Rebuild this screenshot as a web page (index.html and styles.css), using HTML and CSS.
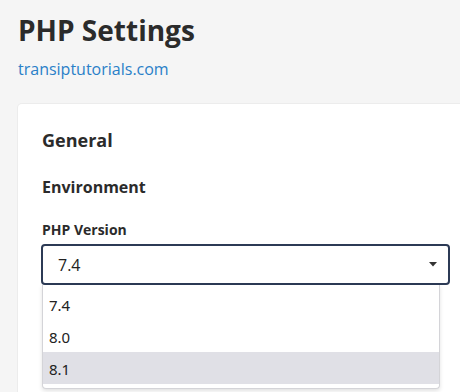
FILE: index.html
```html
<!DOCTYPE html>
<html lang="en">
<head>
<meta charset="utf-8">
<title>PHP Settings</title>
<link rel="stylesheet" href="styles.css">
</head>
<body>
<div class="page">
  <header class="page-head">
    <h1 class="title">PHP Settings</h1>
    <a class="domain" href="#">transiptutorials.com</a>
  </header>
  <section class="card">
    <h2 class="card-title">General</h2>
    <h3 class="group-title">Environment</h3>
    <label class="field-label">PHP Version</label>
    <div class="select-wrap">
      <div class="select">
        <span class="select-value">7.4</span>
        <svg class="caret" width="8" height="5" viewBox="0 0 8 5"><path d="M0 0H8L4 4.5Z" fill="#333"/></svg>
      </div>
      <ul class="listbox">
        <li class="option">7.4</li>
        <li class="option">8.0</li>
        <li class="option option-hover">8.1</li>
      </ul>
    </div>
  </section>
</div>
</body>
</html>
```
FILE: styles.css
```css
html, body {
  margin: 0;
  padding: 0;
  overflow: hidden;
}
body {
  background: #f5f5f5;
  font-family: "Open Sans", "Noto Sans", sans-serif;
  color: #2b2b2b;
  width: 460px;
  height: 392px;
}
.page {
  box-sizing: border-box;
  height: 392px;
  padding: 13px 0 0 18px;
  display: flex;
  flex-direction: column;
}
.page-head {
  display: flex;
  flex-direction: column;
  align-items: flex-start;
}
.title {
  margin: 0;
  font-size: 28px;
  line-height: 34px;
  font-weight: 700;
  color: #2b2b2b;
}
.domain {
  margin-top: 11px;
  font-size: 16px;
  line-height: 22px;
  color: #2a80c8;
  text-decoration: none;
}
.card {
  box-sizing: border-box;
  margin-top: 24px;
  width: 442px;
  flex: 1;
  background: #fff;
  border-radius: 4px 0 0 0;
  box-shadow: 0 0 0 1px #ececec;
  padding: 22px 0 0 24px;
}
.card-title {
  margin: 0;
  font-size: 18px;
  line-height: 28px;
  font-weight: 700;
  color: #2b2b2b;
}
.group-title {
  margin: 22px 0 0;
  font-size: 16px;
  line-height: 22px;
  font-weight: 700;
  color: #2b2b2b;
}
.field-label {
  display: block;
  margin-top: 22px;
  font-size: 14px;
  line-height: 20px;
  font-weight: 700;
  color: #2b2b2b;
}
.select-wrap {
  position: relative;
  margin-top: 4px;
  margin-left: -1px;
  width: 409px;
}
.select {
  box-sizing: border-box;
  height: 41px;
  border: 2px solid #2c3a55;
  border-radius: 4px;
  display: flex;
  align-items: center;
  justify-content: space-between;
  padding: 0 11px 0 15px;
  background: #fff;
}
.select-value {
  font-size: 16px;
  color: #222;
}
.caret {
  display: block;
}
.listbox {
  position: absolute;
  top: 41px;
  left: 1px;
  width: 398px;
  box-sizing: border-box;
  margin: 0;
  padding: 3px 0 4px;
  list-style: none;
  background: #fff;
  border: 1px solid #d4d4d8;
  border-top: none;
  border-radius: 0 0 4px 4px;
  box-shadow: 0 2px 4px rgba(0,0,0,0.12);
  font-family: "Noto Sans", "Open Sans", sans-serif;
  font-size: 15px;
  color: #222;
}
.option {
  height: 32px;
  line-height: 34px;
  padding-left: 6px;
}
.option-hover {
  background: #e0e0e6;
}
```
